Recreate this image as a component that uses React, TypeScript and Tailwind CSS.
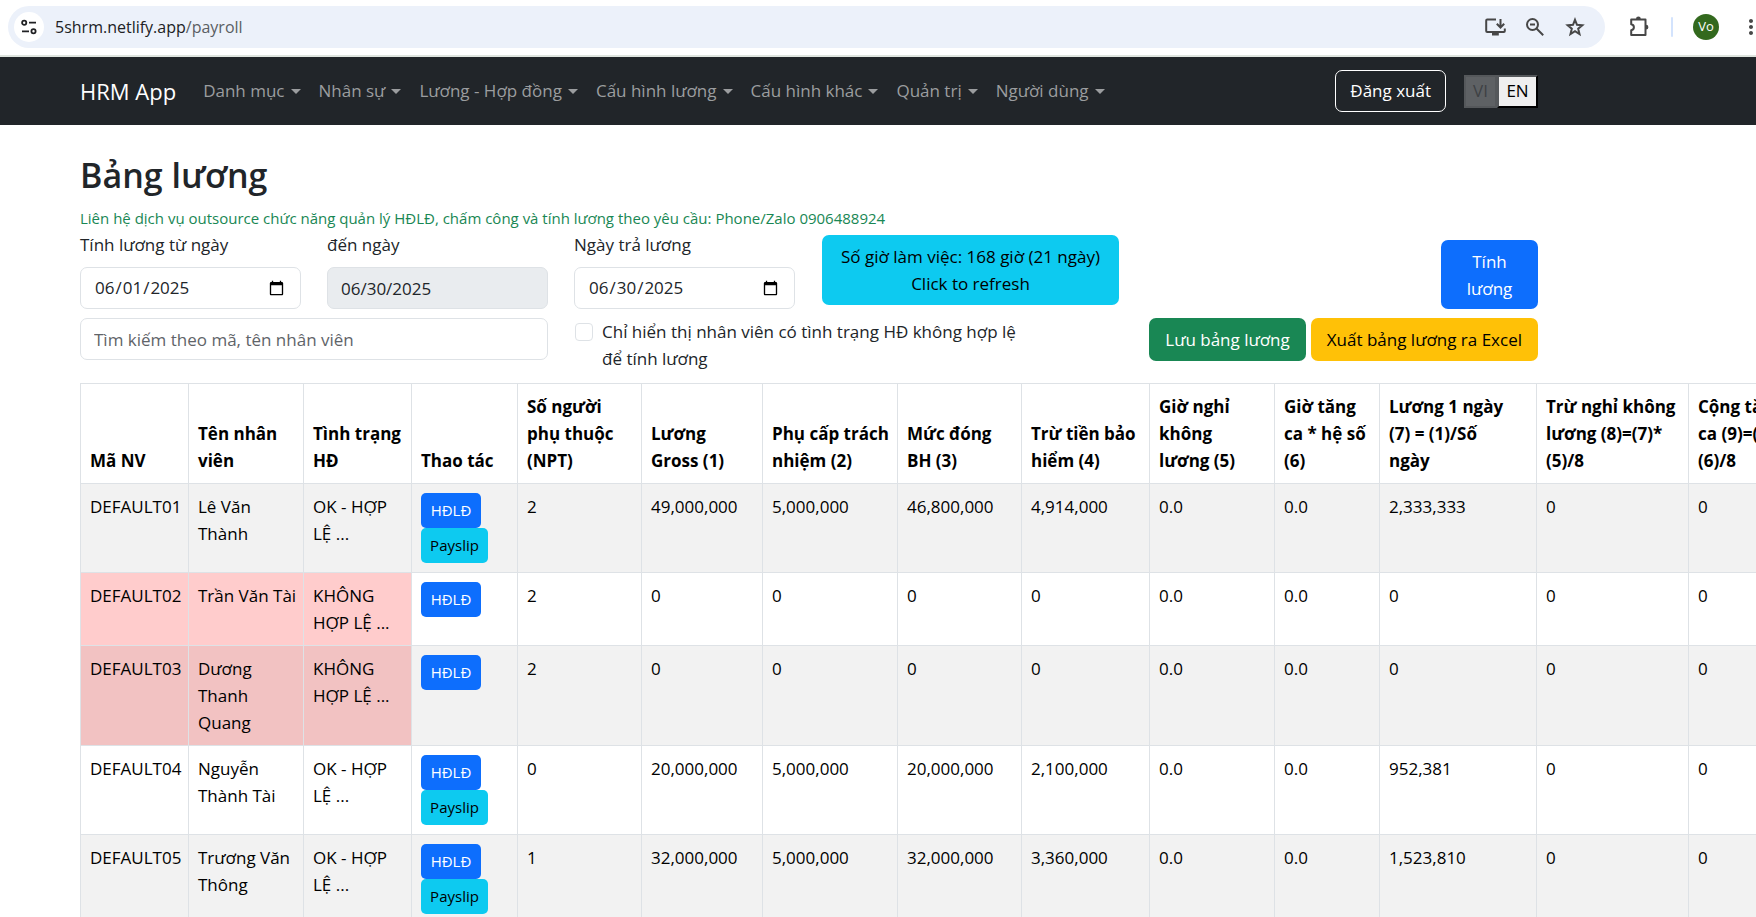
import type { ReactNode } from "react";
import { MdMoreVert } from "react-icons/md";

const MENU = [
  "Danh mục",
  "Nhân sự",
  "Lương - Hợp đồng",
  "Cấu hình lương",
  "Cấu hình khác",
  "Quản trị",
  "Người dùng",
];

const COLUMNS: { lines: string[]; width: string }[] = [
  { lines: ["Mã NV"], width: "w-[108px]" },
  { lines: ["Tên nhân", "viên"], width: "w-[115px]" },
  { lines: ["Tình trạng", "HĐ"], width: "w-[108px]" },
  { lines: ["Thao tác"], width: "w-[106px]" },
  { lines: ["Số người", "phụ thuộc", "(NPT)"], width: "w-[124px]" },
  { lines: ["Lương", "Gross (1)"], width: "w-[121px]" },
  { lines: ["Phụ cấp trách", "nhiệm (2)"], width: "w-[135px]" },
  { lines: ["Mức đóng", "BH (3)"], width: "w-[124px]" },
  { lines: ["Trừ tiền bảo", "hiểm (4)"], width: "w-[128px]" },
  { lines: ["Giờ nghỉ", "không", "lương (5)"], width: "w-[125px]" },
  { lines: ["Giờ tăng", "ca * hệ số", "(6)"], width: "w-[105px]" },
  { lines: ["Lương 1 ngày", "(7) = (1)/Số", "ngày"], width: "w-[157px]" },
  { lines: ["Trừ nghỉ không", "lương (8)=(7)*", "(5)/8"], width: "w-[152px]" },
  { lines: ["Cộng tăng", "ca (9)=(7)*", "(6)/8"], width: "w-[140px]" },
];

type Employee = {
  id: string;
  name: string[];
  valid: boolean;
  values: string[];
};

const EMPLOYEES: Employee[] = [
  {
    id: "DEFAULT01",
    name: ["Lê Văn", "Thành"],
    valid: true,
    values: ["2", "49,000,000", "5,000,000", "46,800,000", "4,914,000", "0.0", "0.0", "2,333,333", "0", "0"],
  },
  {
    id: "DEFAULT02",
    name: ["Trần Văn Tài"],
    valid: false,
    values: ["2", "0", "0", "0", "0", "0.0", "0.0", "0", "0", "0"],
  },
  {
    id: "DEFAULT03",
    name: ["Dương", "Thanh", "Quang"],
    valid: false,
    values: ["2", "0", "0", "0", "0", "0.0", "0.0", "0", "0", "0"],
  },
  {
    id: "DEFAULT04",
    name: ["Nguyễn", "Thành Tài"],
    valid: true,
    values: ["0", "20,000,000", "5,000,000", "20,000,000", "2,100,000", "0.0", "0.0", "952,381", "0", "0"],
  },
  {
    id: "DEFAULT05",
    name: ["Trương Văn", "Thông"],
    valid: true,
    values: ["1", "32,000,000", "5,000,000", "32,000,000", "3,360,000", "0.0", "0.0", "1,523,810", "0", "0"],
  },
];

function Lines({ lines }: { lines: string[] }) {
  return (
    <>
      {lines.map((line) => (
        <span key={line} className="block whitespace-nowrap">{line}</span>
      ))}
    </>
  );
}

function SiteSettingsIcon() {
  return (
    <svg viewBox="0 0 16 16" className="size-4" fill="none" stroke="#202124" strokeWidth="1.8" aria-hidden="true">
      <circle cx="3.2" cy="3.7" r="2.1" />
      <path d="M8 3.7h7M1 12.3h7" />
      <circle cx="12.5" cy="12.3" r="2.1" />
    </svg>
  );
}

function BarIcon({ children }: { children: ReactNode }) {
  return (
    <svg viewBox="0 0 24 24" className="size-6" fill="none" stroke="currentColor" strokeWidth="2" aria-hidden="true">
      {children}
    </svg>
  );
}

function BrowserBar() {
  return (
    <div className="flex h-[57px] items-start border-b-2 border-[#dfe5df] bg-white pt-[6px] pl-2">
      <div className="flex h-[42px] w-[1597px] shrink-0 items-center rounded-full bg-[#ecf1fa] pr-[18px] pl-[6px] text-[#474747]">
        <button type="button" aria-label="Thông tin trang" className="flex size-[30px] items-center justify-center rounded-full bg-white">
          <SiteSettingsIcon />
        </button>
        <div className="ml-[11px] flex-1 text-[16px] text-[#5a5e63]">
          <span className="text-[#202124]">5shrm.netlify.app</span>/payroll
        </div>
        <div className="flex items-center gap-4">
          <button type="button" aria-label="Cài đặt ứng dụng">
            <BarIcon>
              <path d="M13 4.5H4.2a1 1 0 0 0-1 1V16a1 1 0 0 0 1 1h16.600a1 1 0 0 0 1-1v-2.500" />
              <path d="M17.500 4v8M13.800 8.800l3.700 3.700 3.700-3.700" />
              <path d="M9 19h6.800" strokeWidth="3" />
            </BarIcon>
          </button>
          <button type="button" aria-label="Thu phóng">
            <BarIcon>
              <circle cx="9.500" cy="9.500" r="5.500" />
              <path d="M13.500 13.500l6.700 6.700M7 9.500h5" />
            </BarIcon>
          </button>
          <button type="button" aria-label="Đánh dấu trang">
            <BarIcon>
              <path d="M12 4.800l2 5 5.300.4-4.100 3.500 1.300 5.300-4.500-2.900L7.500 19l1.300-5.300-4.100-3.500 5.300-.4z" />
            </BarIcon>
          </button>
        </div>
      </div>
      <div className="flex h-[42px] shrink-0 items-center text-[#474747]">
        <button type="button" aria-label="Tiện ích" className="ml-[22px]">
          <BarIcon>
            <path d="M4.200 4.500h14.300v15.500H4.200v-4.800c3.600-.6 3.600-5.300 0-5.900z" strokeLinejoin="round" />
            <path d="M9 4a2.400 2.400 0 0 1 4.800 0zM19 9.800a2.400 2.400 0 0 1 0 4.800z" fill="currentColor" stroke="none" />
          </BarIcon>
        </button>
        <span className="ml-5 h-5 w-[2px] rounded bg-[#d3e3fd]" />
        <button type="button" className="ml-5 flex size-[26px] items-center justify-center rounded-full bg-[#33691e] text-[13px] text-white">
          Vo
        </button>
        <button type="button" aria-label="Thêm" className="ml-5"><MdMoreVert className="size-6" /></button>
      </div>
    </div>
  );
}

function NavBar() {
  return (
    <header className="bg-[#212529]">
      <div className="ml-20 flex h-[68px] max-w-[1458px] items-center">
        <a href="#" className="mr-[18px] text-[22px] text-white">HRM App</a>
        <nav className="flex flex-1">
          {MENU.map((item) => (
            <a key={item} href="#" className="flex items-center gap-[6px] px-[9px] text-[17px] whitespace-nowrap text-[#9b9d9f]">
              {item}
              <span className="border-x-[5px] border-t-[5px] border-x-transparent" />
            </a>
          ))}
        </nav>
        <button type="button" className="h-[42px] rounded-[7px] border border-white px-[14px] text-[17px] text-white">
          Đăng xuất
        </button>
        <div className="ml-[18px] flex text-[17px]">
          <button type="button" disabled className="h-[33px] w-[33px] border-2 border-[#55585b] bg-[#5e6164] text-[#3e4144]">
            VI
          </button>
          <button type="button" className="h-[33px] w-[41px] border-2 border-t-[#55585b] border-r-black border-b-black border-l-[#55585b] bg-[#efefef] text-black">
            EN
          </button>
        </div>
      </div>
    </header>
  );
}

function Field({ id, label, children }: { id: string; label: string; children: ReactNode }) {
  return (
    <div className="w-[221px]">
      <label htmlFor={id} className="mb-[9px] block leading-[27px]">{label}</label>
      {children}
    </div>
  );
}

const CONTROL = "block h-[42px] w-full rounded-[7px] border border-[#dee2e6] px-[13px] text-[17px] text-[#212529]";

function Filters() {
  return (
    <div className="max-w-[1458px]">
      <div className="flex items-start">
        <div className="flex gap-[26px]">
          <Field id="from" label="Tính lương từ ngày">
            <input id="from" type="date" defaultValue="2025-06-01" className={`${CONTROL} bg-white`} />
          </Field>
          <Field id="to" label="đến ngày">
            <input id="to" type="text" disabled value="06/30/2025" className={`${CONTROL} bg-[#e9ecef]`} />
          </Field>
          <Field id="pay" label="Ngày trả lương">
            <input id="pay" type="date" defaultValue="2025-06-30" className={`${CONTROL} bg-white`} />
          </Field>
        </div>
        <button type="button" className="mt-1 ml-[27px] h-[70px] w-[297px] rounded-[7px] bg-[#0dcaf0] leading-[27px] text-black">
          Số giờ làm việc: 168 giờ (21 ngày)
          <br />
          Click to refresh
        </button>
        <button type="button" className="mt-[9px] ml-auto h-[69px] w-[97px] rounded-[7px] bg-[#0d6efd] px-[13px] leading-[27px] text-white">
          Tính lương
        </button>
      </div>
      <div className="mt-[9px] flex items-start">
        <input
          type="text"
          aria-label="Tìm kiếm"
          placeholder="Tìm kiếm theo mã, tên nhân viên"
          className={`${CONTROL} max-w-[468px] placeholder:text-[#5f6469]`}
        />
        <label className="ml-[27px] flex w-[442px] items-start gap-[9px] leading-[27px]">
          <input type="checkbox" className="mt-[5px] size-[18px] shrink-0 appearance-none rounded border border-[#dee2e6] bg-white" />
          <span>Chỉ hiển thị nhân viên có tình trạng HĐ không hợp lệ để tính lương</span>
        </label>
        <div className="ml-auto flex gap-[5px] whitespace-nowrap">
          <button type="button" className="h-[43px] rounded-[7px] bg-[#198754] px-4 text-white">Lưu bảng lương</button>
          <button type="button" className="h-[43px] rounded-[7px] bg-[#ffc107] px-4 text-black">Xuất bảng lương ra Excel</button>
        </div>
      </div>
    </div>
  );
}

function PayrollTable() {
  return (
    <table className="mt-[11px] w-[1748px] table-fixed border-collapse text-left leading-[27px] text-black">
      <thead>
        <tr>
          {COLUMNS.map(({ lines, width }) => (
            <th key={lines.join(" ")} scope="col" className={`${width} border border-[#dee2e6] p-[9px] align-bottom font-bold`}>
              <Lines lines={lines} />
            </th>
          ))}
        </tr>
      </thead>
      <tbody>
        {EMPLOYEES.map((employee) => (
          <tr key={employee.id} className="group align-top odd:bg-[#f2f2f2]">
            {[[employee.id], employee.name, employee.valid ? ["OK - HỢP", "LỆ ..."] : ["KHÔNG", "HỢP LỆ ..."]].map((lines) => (
              <td
                key={lines.join(" ")}
                className={`border border-[#dee2e6] p-[9px] ${employee.valid ? "" : "bg-[#ffcccc] group-odd:bg-[#f2c2c2]"}`}
              >
                <Lines lines={lines} />
              </td>
            ))}
            <td className="border border-[#dee2e6] p-[9px]">
              <div className="flex flex-col items-start text-[15px]">
                <button type="button" className="h-[35px] w-[60px] rounded-[5px] bg-[#0d6efd] text-white">HĐLĐ</button>
                {employee.valid && (
                  <button type="button" className="h-[35px] w-[67px] rounded-[5px] bg-[#0dcaf0] text-black">Payslip</button>
                )}
              </div>
            </td>
            {employee.values.map((value, index) => (
              <td key={index} className="border border-[#dee2e6] p-[9px]">{value}</td>
            ))}
          </tr>
        ))}
      </tbody>
    </table>
  );
}

export default function App() {
  return (
    <div className="h-screen overflow-hidden bg-white font-['Open_Sans','Noto_Sans',sans-serif] text-[17px] text-[#212529]">
      <BrowserBar />
      <NavBar />
      <main className="pt-[26px] pl-20">
        <h1 className="text-[34px] leading-[48px] font-semibold">Bảng lương</h1>
        <p className="mt-[6px] text-[15px] leading-[26px] text-[#198754]">
          Liên hệ dịch vụ outsource chức năng quản lý HĐLĐ, chấm công và tính lương theo yêu cầu: Phone/Zalo 0906488924
        </p>
        <Filters />
        <PayrollTable />
      </main>
    </div>
  );
}
